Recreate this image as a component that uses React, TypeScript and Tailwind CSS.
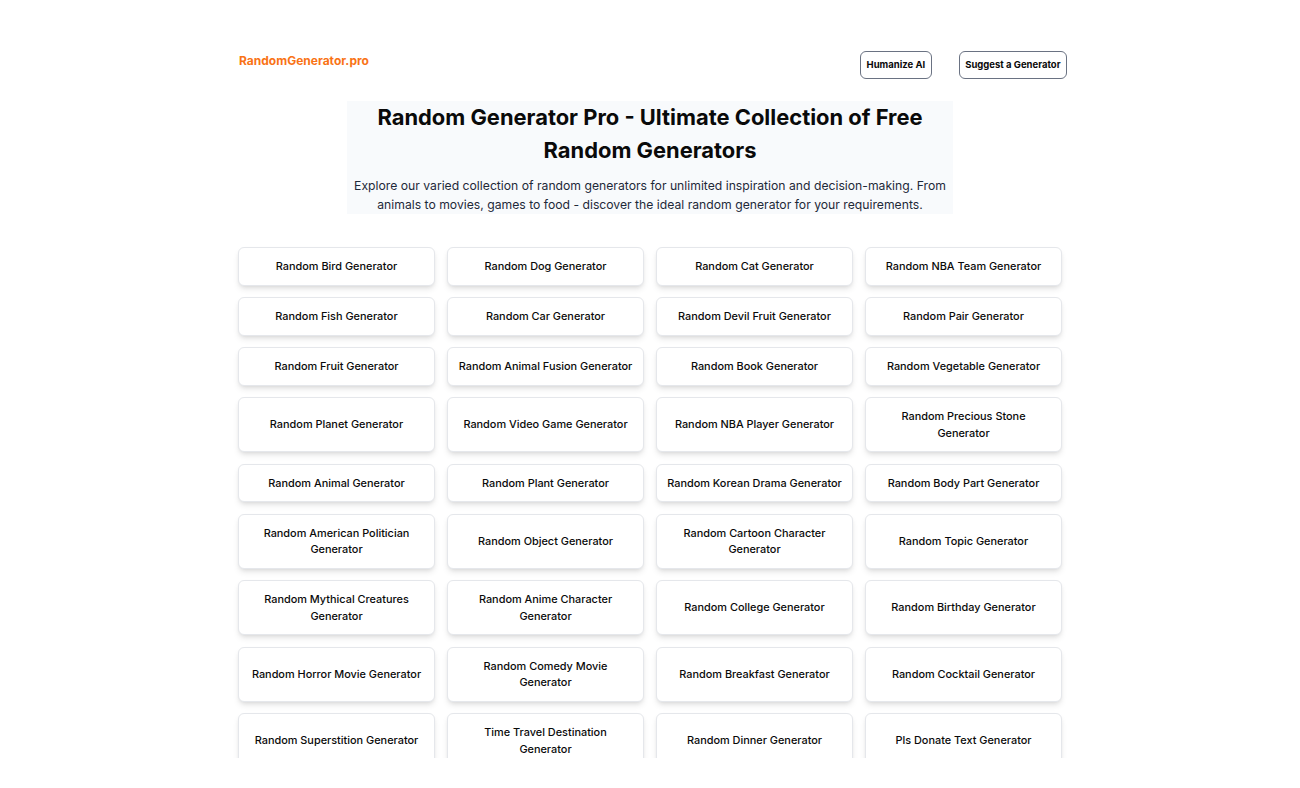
import React from 'react';

const GENERATORS = [
  'Random Bird Generator',
  'Random Dog Generator',
  'Random Cat Generator',
  'Random NBA Team Generator',
  'Random Fish Generator',
  'Random Car Generator',
  'Random Devil Fruit Generator',
  'Random Pair Generator',
  'Random Fruit Generator',
  'Random Animal Fusion Generator',
  'Random Book Generator',
  'Random Vegetable Generator',
  'Random Planet Generator',
  'Random Video Game Generator',
  'Random NBA Player Generator',
  'Random Precious Stone Generator',
  'Random Animal Generator',
  'Random Plant Generator',
  'Random Korean Drama Generator',
  'Random Body Part Generator',
  'Random American Politician Generator',
  'Random Object Generator',
  'Random Cartoon Character Generator',
  'Random Topic Generator',
  'Random Mythical Creatures Generator',
  'Random Anime Character Generator',
  'Random College Generator',
  'Random Birthday Generator',
  'Random Horror Movie Generator',
  'Random Comedy Movie Generator',
  'Random Breakfast Generator',
  'Random Cocktail Generator',
  'Random Superstition Generator',
  'Time Travel Destination Generator',
  'Random Dinner Generator',
  'Pls Donate Text Generator',
];

export default function App() {
  return (
    <div className="h-[758px] overflow-hidden bg-white font-['Inter',sans-serif] text-[#0a0a0a]">
      <div className="w-[824px] mx-auto pt-[51px]">
        <header className="flex items-center justify-between mr-[-5px]">
          <a href="#" className="ml-px text-[12px] font-bold text-[#f97316] -mt-[9px]">RandomGenerator.pro</a>
          <div className="flex items-center gap-[27px]">
            <button className="h-[28px] px-[5.5px] border border-gray-500 rounded-md text-[9.5px] font-bold">Humanize AI</button>
            <button className="h-[28px] px-[5.5px] border border-gray-500 rounded-md text-[9.5px] font-bold">Suggest a Generator</button>
          </div>
        </header>

        <section className="w-[606px] mx-auto mt-[22px] bg-slate-50 text-center">
          <h1 className="text-[21.9px] leading-[33px] font-bold">
            Random Generator Pro - Ultimate Collection of Free Random Generators
          </h1>
          <p className="mt-[9px] text-[12.2px] leading-[19px] text-gray-800">
            Explore our varied collection of random generators for unlimited inspiration and decision-making. From animals to movies, games to food - discover the ideal random generator for your requirements.
          </p>
        </section>

        <div className="grid grid-cols-4 gap-x-3 gap-y-[11.5px] mt-[33px]">
          {GENERATORS.map((name) => (
            <a
              key={name}
              href="#"
              className="flex items-center justify-center text-center px-[10px] py-[10px] bg-white border border-gray-200 rounded-md shadow-md text-[10.9px] leading-[16.5px] font-medium"
            >
              {name}
            </a>
          ))}
        </div>
      </div>
    </div>
  );
}
